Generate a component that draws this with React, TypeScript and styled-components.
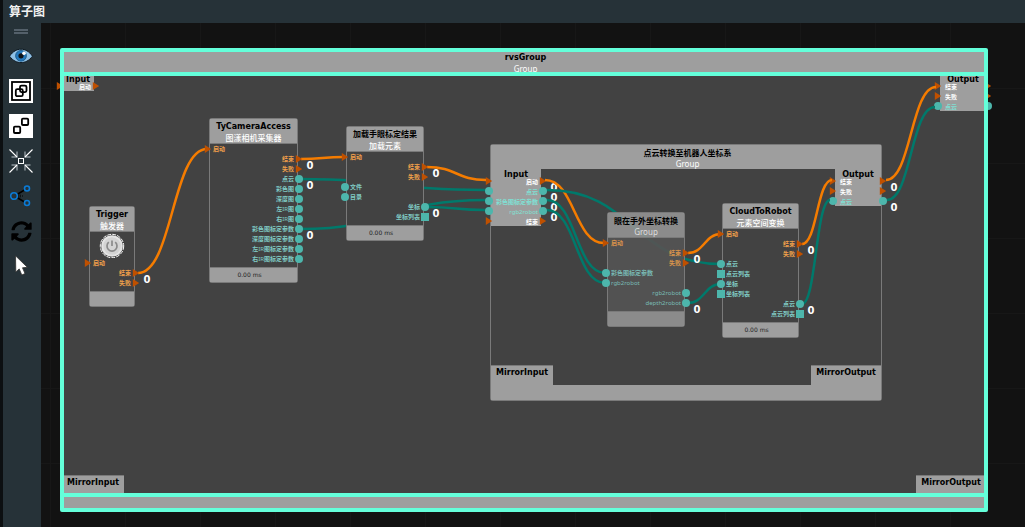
import React from "react";
import styled, { createGlobalStyle, css } from "styled-components";
import { FaSyncAlt } from "react-icons/fa";

/* ---------- theme ---------- */

const color = {
  bar: "#263238",
  canvas: "#121212",
  grid: "#171717",
  body: "#424242",
  shell: "#9e9e9e",
  outline: "#7a7a7a",
  selected: "#64ffda",
  flowMarker: "#bf5000",
  flowEdge: "#f57c00",
  flowLabel: "#f0a04b",
  dataMarker: "#4db6ac",
  dataEdge: "#00796b",
  dataLabel: "#80cbc4",
  panelDataLabel: "#80e0d4",
};

const uiFont = `"Noto Sans", "Noto Sans CJK SC", sans-serif`;
const titleFont = `"DejaVu Sans", "Noto Sans CJK SC", sans-serif`;

const GlobalStyle = createGlobalStyle`
  *, *::before, *::after { box-sizing: border-box; }
  body { margin: 0; background: ${color.canvas}; font-family: ${uiFont}; }
`;

/* ---------- window ---------- */

const Window = styled.div`
  display: flex;
  flex-direction: column;
  height: 100vh;
  overflow: hidden;
  border-left: 3px solid #0c0f11;
  background: ${color.bar};
`;

const TitleBar = styled.header`
  flex: none;
  height: 23px;
  padding-left: 6px;
`;

const WindowTitle = styled.h1`
  margin: 0;
  font-size: 12px;
  line-height: 23px;
  font-weight: 700;
  color: #f2f2f2;
`;

const Workspace = styled.div`
  display: flex;
  flex: 1;
  min-height: 0;
`;

const Toolbar = styled.nav`
  flex: none;
  width: 38px;
  display: flex;
  flex-direction: column;
  align-items: center;
  gap: 11px;
  padding-top: 6px;
`;

const Grip = styled.div`
  width: 14px;
  height: 5px;
  margin-right: 2px;
  margin-bottom: -1px;
  border: solid #54606a;
  border-width: 2px 0;
`;

const ToolButton = styled.button`
  width: 24px;
  height: 24px;
  margin: 0 2px 0 0;
  padding: 0;
  border: 0;
  background: none;
  color: #000;
  display: flex;
  align-items: center;
  justify-content: center;
  cursor: pointer;
`;

const Canvas = styled.main`
  flex: 1;
  min-width: 0;
  position: relative;
  overflow: hidden;
  background-color: ${color.canvas};
  background-image: linear-gradient(90deg, ${color.grid} 1px, transparent 1px),
    linear-gradient(${color.grid} 1px, transparent 1px);
  background-size: 75px 75px;
  background-position: 9px 65px;
`;

/* Graph space, panned so that its origin is the window corner. */
const Scene = styled.div`
  position: absolute;
  left: -41px;
  top: -23px;
  width: 1025px;
  height: 527px;
`;

const EdgeLayer = styled.svg`
  position: absolute;
  inset: 0;
  width: 100%;
  height: 100%;
  overflow: visible;
  pointer-events: none;
`;

/* ---------- toolbar icons ---------- */

const EyeIcon = () => (
  <svg width="24" height="24" viewBox="0 0 24 24">
    <path d="M0.5 12.2C4 7.2 8 5.2 12 5.2s8 2 11.5 7C20 16.8 16 18.6 12 18.6S4 16.8 0.5 12.2Z" fill="#8fc1e6" stroke="#101a22" strokeWidth="1" />
    <circle cx="12" cy="11.800" r="5.400" fill="#2479bd" stroke="#17527f" strokeWidth="0.800" />
    <circle cx="12" cy="11.800" r="2.600" fill="#101418" />
    <circle cx="15" cy="9.300" r="1.800" fill="#fff" />
  </svg>
);

const GroupIcon = () => (
  <svg width="24" height="24" viewBox="0 0 24 24" fill="none" stroke="#000" strokeWidth="1.800">
    <rect width="24" height="24" fill="#fff" stroke="none" />
    <rect x="3" y="3" width="18" height="18" />
    <rect x="6.800" y="10.200" width="7" height="7" rx="1.500" />
    <rect x="11" y="6.600" width="6.500" height="6.500" rx="1.500" />
  </svg>
);

const UngroupIcon = () => (
  <svg width="24" height="24" viewBox="0 0 24 24" fill="none" stroke="#000" strokeWidth="1.800">
    <rect width="24" height="24" fill="#fff" stroke="none" />
    <rect x="4.900" y="12.700" width="6.300" height="6.300" rx="1" />
    <rect x="12.900" y="4.700" width="6.300" height="6.300" rx="1" />
  </svg>
);

const CollapseIcon = () => (
  <svg width="24" height="24" viewBox="0 0 24 24" fill="none">
    <path d="M8 2.500V8H2.500M16 2.500V8h5.500M8 21.500V16H2.500M16 21.500V16h5.500" stroke="#8b9499" strokeWidth="1.500" />
    <path d="M0.500 0.500L8 8M23.500 0.500L16 8M0.500 23.500L8 16M23.500 23.500L16 16" stroke="#fff" strokeWidth="1.100" />
    <rect x="9.500" y="9.500" width="5" height="5" stroke="#fff" />
  </svg>
);

const ShareIcon = () => (
  <svg width="24" height="24" viewBox="0 0 24 24" fill="none">
    <path d="M8 10.500L15.500 6M8 13.500L15.500 18" stroke="#000" strokeWidth="1.500" />
    <path d="M9 12h5M11 10.500v3" stroke="#000" strokeWidth="1" strokeDasharray="1 1" />
    <g stroke="#0b7bd6" strokeWidth="1.600">
      <circle cx="5" cy="12" r="3.300" />
      <circle cx="18" cy="4.500" r="2.500" />
      <circle cx="18" cy="19" r="2.500" />
    </g>
  </svg>
);

const CursorIcon = () => (
  <svg width="24" height="24" viewBox="0 0 24 24">
    <path d="M6.500 1.800L6.800 18L10.200 14.900L12.800 21L16 19.600L13.500 13.800L18.400 13.300Z" fill="#fff" stroke="#30302f" strokeWidth="0.800" />
  </svg>
);

const tools = [
  { name: "显示", icon: <EyeIcon /> },
  { name: "组合", icon: <GroupIcon /> },
  { name: "取消组合", icon: <UngroupIcon /> },
  { name: "居中", icon: <CollapseIcon /> },
  { name: "连接", icon: <ShareIcon /> },
  { name: "刷新", icon: <FaSyncAlt size={21} /> },
  { name: "选择", icon: <CursorIcon /> },
];

/* ---------- ports ---------- */

type Kind = "flow" | "data" | "list";
type Side = "left" | "right";

interface Port {
  label: string;
  kind: Kind;
  side: Side;
  both?: boolean;
  linked?: boolean;
}

const inp = (label: string, kind: Kind = "data"): Port => ({ label, kind, side: "left" });
const out = (label: string, kind: Kind = "data", linked = false): Port => ({ label, kind, side: "right", linked });

const Latin = styled.span`
  font-weight: 400;
`;

/* Chinese runs keep the bold weight, Latin runs are set in regular. */
const Mixed = ({ text }: { text: string }) => (
  <>
    {text.split(/([A-Za-z0-9]+)/).map((run, i) => (i % 2 ? <Latin key={i}>{run}</Latin> : run))}
  </>
);

const PortRow = styled.li<{ $side: Side }>`
  position: relative;
  height: 10px;
  padding: 0 3px;
  display: flex;
  justify-content: ${(p) => (p.$side === "left" ? "flex-start" : "flex-end")};
`;

const labelColor = (kind: Kind, panel?: boolean) => {
  if (kind === "flow") return panel ? "#fff" : color.flowLabel;
  return panel ? color.panelDataLabel : color.dataLabel;
};

const PortLabel = styled.span<{ $kind: Kind; $side: Side; $panel?: boolean }>`
  font-family: ${uiFont};
  font-size: 6px;
  line-height: 10px;
  font-weight: 700;
  white-space: nowrap;
  color: ${(p) => labelColor(p.$kind, p.$panel)};
  ${(p) => p.$panel && css`padding: 1px 0 0 ${p.$side === "left" ? 2 : 0}px;`}
`;

const Marker = styled.i<{ $kind: Kind; $side: Side }>`
  position: absolute;
  top: 1px;
  ${(p) => p.$side}: -6px;
  width: 8px;
  height: 8px;
  background: ${(p) => (p.$kind === "flow" ? color.flowMarker : color.dataMarker)};
  ${(p) => p.$kind === "data" && css`border-radius: 50%;`}
  ${(p) => p.$kind === "flow" && css`clip-path: polygon(10% 0, 90% 50%, 10% 100%);`}
`;

const LinkCount = styled.span`
  position: absolute;
  right: -17px;
  top: 7px;
  width: 8px;
  text-align: center;
  font-family: "DejaVu Sans", sans-serif;
  font-size: 10px;
  line-height: 10px;
  font-weight: 700;
  color: #fff;
`;

const PortList = styled.ul`
  list-style: none;
  margin: 0;
  padding: 0;
`;

function Ports({ ports, panel }: { ports: Port[]; panel?: boolean }) {
  return (
    <PortList>
      {ports.map((p, i) => (
        <PortRow key={i} $side={p.side}>
          {(p.both || p.side === "left") && <Marker $kind={p.kind} $side="left" />}
          <PortLabel $kind={p.kind} $side={p.side} $panel={panel}><Mixed text={p.label} /></PortLabel>
          {(p.both || p.side === "right") && <Marker $kind={p.kind} $side="right" />}
          {p.linked && <LinkCount>0</LinkCount>}
        </PortRow>
      ))}
    </PortList>
  );
}

/* ---------- nodes ---------- */

const NodeTitle = styled.h2`
  margin: 0;
  font-family: ${titleFont};
  font-size: 8px;
  line-height: inherit;
  font-weight: 700;
  color: #000;
  white-space: nowrap;
`;

const NodeSubtitle = styled.p`
  margin: 0;
  font-size: 8px;
  line-height: inherit;
  font-weight: 500;
  color: #fff;
  white-space: nowrap;
`;

const NodeHead = styled.div<{ $tight?: boolean }>`
  height: 24px;
  padding-top: ${(p) => (p.$tight ? 4 : 2)}px;
  line-height: ${(p) => (p.$tight ? 10 : 11)}px;
  display: flex;
  flex-direction: column;
  align-items: center;
  background: ${color.shell};
`;

const NodeBody = styled.div`
  padding-bottom: 3px;
  background: ${color.body};
  border: solid ${color.outline};
  border-width: 1px 0;
`;

const NodeFoot = styled.div`
  height: 14px;
  font-family: ${titleFont};
  font-size: 6px;
  line-height: 13px;
  padding-right: 8px;
  text-align: center;
  color: #222;
  background: ${color.shell};
`;

const NodeBox = styled.article<{ $x: number; $y: number; $w: number; $dim?: boolean }>`
  position: absolute;
  left: ${(p) => p.$x}px;
  top: ${(p) => p.$y}px;
  width: ${(p) => p.$w}px;
  border-radius: 2px;
  box-shadow: 0 0 0 1px ${color.outline};
  ${(p) =>
    p.$dim &&
    css`
      ${NodeHead}, ${NodeFoot} { background: rgba(148, 148, 148, 0.9); }
      ${NodeBody} { background: rgba(84, 84, 84, 0.93); }
      ${PortLabel} { opacity: 0.85; }
      ${NodeSubtitle} { color: #dedede; }
    `}
`;

const PowerButton = styled.button`
  display: flex;
  align-items: center;
  justify-content: center;
  width: 26px;
  height: 26px;
  margin: 0 auto;
  padding: 0;
  border: 0;
  background: none;
`;

const PowerIcon = () => (
  <svg width="26" height="26" viewBox="0 0 26 26" fill="none">
    <circle cx="13" cy="14" r="12" fill="#303030" />
    <circle cx="13" cy="14" r="11.700" stroke="#fff" strokeWidth="1" strokeDasharray="4 1" />
    <circle cx="13" cy="14" r="10.800" fill="#e4e4e4" />
    <circle cx="13" cy="14" r="8.800" fill="#d4d4d4" />
    <path d="M9.800 10.200a5 5 0 1 0 6.400 0M13 8.500v5.500" stroke="#8a8a8a" strokeWidth="1.700" />
  </svg>
);

interface NodeProps {
  x: number;
  y: number;
  w: number;
  title: string;
  subtitle: string;
  ports: Port[];
  time?: string;
  tight?: boolean;
  dim?: boolean;
  children?: React.ReactNode;
}

function GraphNode({ x, y, w, title, subtitle, ports, time, tight, dim, children }: NodeProps) {
  return (
    <NodeBox $x={x} $y={y} $w={w} $dim={dim}>
      <NodeHead $tight={tight}>
        <NodeTitle>{title}</NodeTitle>
        <NodeSubtitle><Mixed text={subtitle} /></NodeSubtitle>
      </NodeHead>
      <NodeBody>
        {children}
        <Ports ports={ports} />
      </NodeBody>
      <NodeFoot>{time}</NodeFoot>
    </NodeBox>
  );
}

/* ---------- groups ---------- */

const GroupBox = styled.section<{ $x: number; $y: number; $w: number; $h: number; $selected?: boolean }>`
  position: absolute;
  left: ${(p) => p.$x}px;
  top: ${(p) => p.$y}px;
  width: ${(p) => p.$w}px;
  height: ${(p) => p.$h}px;
  display: flex;
  flex-direction: column;
  border-radius: 2px;
  box-shadow: 0 0 0 1px ${color.outline};
  ${(p) =>
    p.$selected &&
    css`
      & > *::after {
        content: "";
        position: absolute;
        z-index: 1;
        inset: -2px;
        border: 4px solid ${color.selected};
        border-radius: 2px;
        pointer-events: none;
      }
    `}
`;

const GroupHead = styled(NodeHead)`
  position: relative;
  flex: none;
  padding-left: 3px;
`;

const GroupBody = styled.div`
  position: relative;
  flex: 1;
  display: flex;
  flex-direction: column;
  justify-content: space-between;
  background: ${color.body};
`;

const GroupFoot = styled.div`
  position: relative;
  flex: none;
  height: 15px;
  background: ${color.shell};
`;

const PanelRow = styled.div`
  display: flex;
  justify-content: space-between;
  align-items: flex-start;
`;

const Panel = styled.div<{ $w: number }>`
  width: ${(p) => p.$w}px;
  background: ${color.shell};
`;

const PanelTitle = styled(NodeTitle)`
  padding-top: 1px;
  line-height: 10px;
  margin-bottom: -4px;
  text-align: center;
`;

const MirrorTab = styled.div<{ $w: number }>`
  width: ${(p) => p.$w}px;
  height: 20px;
  padding-top: 3px;
  text-align: center;
  line-height: 10px;
  background: ${color.shell};
  box-shadow: inset 0 1px 0 ${color.outline};
`;

interface GroupProps {
  x: number;
  y: number;
  w: number;
  h: number;
  title: string;
  tight?: boolean;
  selected?: boolean;
  inputWidth: number;
  inputs: Port[];
  outputs: Port[];
}

function Group({ x, y, w, h, title, tight, selected, inputWidth, inputs, outputs }: GroupProps) {
  return (
    <GroupBox $x={x} $y={y} $w={w} $h={h} $selected={selected}>
      <GroupHead $tight={tight}>
        <NodeTitle>{title}</NodeTitle>
        <NodeSubtitle><Mixed text="Group" /></NodeSubtitle>
      </GroupHead>
      <GroupBody>
        <PanelRow>
          <Panel $w={inputWidth}>
            <PanelTitle>Input</PanelTitle>
            <Ports ports={inputs} panel />
          </Panel>
          <Panel $w={46}>
            <PanelTitle>Output</PanelTitle>
            <Ports ports={outputs} panel />
          </Panel>
        </PanelRow>
        <PanelRow>
          <MirrorTab $w={62}><NodeTitle>MirrorInput</NodeTitle></MirrorTab>
          <MirrorTab $w={70}><NodeTitle>MirrorOutput</NodeTitle></MirrorTab>
        </PanelRow>
      </GroupBody>
      <GroupFoot />
    </GroupBox>
  );
}

const panelIn = (label: string, kind: Kind = "data", linked = false): Port => ({ label, kind, side: "right", both: true, linked });
const panelOut = (label: string, kind: Kind = "data", linked = false): Port => ({ label, kind, side: "left", both: true, linked });

/* ---------- edges ---------- */

type Edge = [Kind, number, number, number, number];

const edges: Edge[] = [
  ["flow", 138, 273, 207, 149],
  ["flow", 301, 159, 344, 157],
  ["flow", 427, 167, 486, 180],
  ["data", 300, 179, 485, 190],
  ["data", 300, 229, 485, 200],
  ["data", 427, 207, 485, 210],
  ["flow", 545, 180, 604, 243],
  ["data", 547, 190, 721, 264],
  ["data", 547, 200, 605, 273],
  ["data", 547, 210, 605, 283],
  ["flow", 688, 253, 721, 234],
  ["data", 688, 303, 721, 284],
  ["flow", 802, 244, 832, 180],
  ["data", 802, 304, 830, 200],
  ["flow", 886, 180, 936, 87],
  ["data", 887, 200, 935, 107],
];

const edgePath = ([, x1, y1, x2, y2]: Edge) => {
  const mid = (x1 + x2) / 2;
  return `M${x1} ${y1}C${mid} ${y1} ${mid} ${y2} ${x2} ${y2}`;
};

/* ---------- app ---------- */

export default function App() {
  return (
    <>
      <GlobalStyle />
      <Window>
        <TitleBar>
          <WindowTitle>算子图</WindowTitle>
        </TitleBar>
        <Workspace>
          <Toolbar aria-label="工具">
            <Grip />
            {tools.map((t) => (
              <ToolButton key={t.name} type="button" aria-label={t.name}>{t.icon}</ToolButton>
            ))}
          </Toolbar>
          <Canvas>
            <Scene>
              <Group
                x={62} y={50} w={924} h={460} title="rvsGroup" selected inputWidth={32}
                inputs={[panelIn("启动", "flow")]}
                outputs={[panelOut("结束", "flow"), panelOut("失败", "flow"), panelOut("点云")]}
              />
              <Group
                x={491} y={145} w={390} h={255} title="点云转换至机器人坐标系" tight inputWidth={50}
                inputs={[
                  panelIn("启动", "flow", true),
                  panelIn("点云", "data", true),
                  panelIn("彩色图标定参数", "data", true),
                  panelIn("rgb2robot", "data", true),
                  panelIn("结束", "flow"),
                ]}
                outputs={[panelOut("结束", "flow", true), panelOut("失败", "flow"), panelOut("点云", "data", true)]}
              />
              <EdgeLayer aria-hidden="true" fill="none" strokeWidth="2.500">
                {edges.map((e, i) => (
                  <path key={i} d={edgePath(e)} stroke={e[0] === "flow" ? color.flowEdge : color.dataEdge} />
                ))}
              </EdgeLayer>
              <GraphNode
                x={90} y={207} w={44} title="Trigger" subtitle="触发器"
                ports={[inp("启动", "flow"), out("结束", "flow", true), out("失败", "flow")]}
              >
                <PowerButton type="button" aria-label="触发"><PowerIcon /></PowerButton>
              </GraphNode>
              <GraphNode
                x={210} y={119} w={87} title="TyCameraAccess" subtitle="图漾相机采集器" time="0.00 ms"
                ports={[
                  inp("启动", "flow"),
                  out("结束", "flow", true),
                  out("失败", "flow"),
                  out("点云", "data", true),
                  out("彩色图"),
                  out("深度图"),
                  out("左IR图"),
                  out("右IR图"),
                  out("彩色图标定参数", "data", true),
                  out("深度图标定参数"),
                  out("左IR图标定参数"),
                  out("右IR图标定参数"),
                ]}
              />
              <GraphNode
                x={347} y={127} w={76} title="加载手眼标定结果" subtitle="加载元素" time="0.00 ms"
                ports={[
                  inp("启动", "flow"),
                  out("结束", "flow", true),
                  out("失败", "flow"),
                  inp("文件"),
                  inp("目录"),
                  out("坐标", "data", true),
                  out("坐标列表", "list"),
                ]}
              />
              <GraphNode
                x={608} y={213} w={76} title="眼在手外坐标转换" subtitle="Group" tight dim
                ports={[
                  inp("启动", "flow"),
                  out("结束", "flow", true),
                  out("失败", "flow"),
                  inp("彩色图标定参数"),
                  inp("rgb2robot"),
                  out("rgb2robot"),
                  out("depth2robot", "data", true),
                ]}
              />
              <GraphNode
                x={723} y={204} w={75} title="CloudToRobot" subtitle="元素空间变换" time="0.00 ms"
                ports={[
                  inp("启动", "flow"),
                  out("结束", "flow", true),
                  out("失败", "flow"),
                  inp("点云"),
                  inp("点云列表", "list"),
                  inp("坐标"),
                  inp("坐标列表", "list"),
                  out("点云", "data", true),
                  out("点云列表", "list"),
                ]}
              />
            </Scene>
          </Canvas>
        </Workspace>
      </Window>
    </>
  );
}
